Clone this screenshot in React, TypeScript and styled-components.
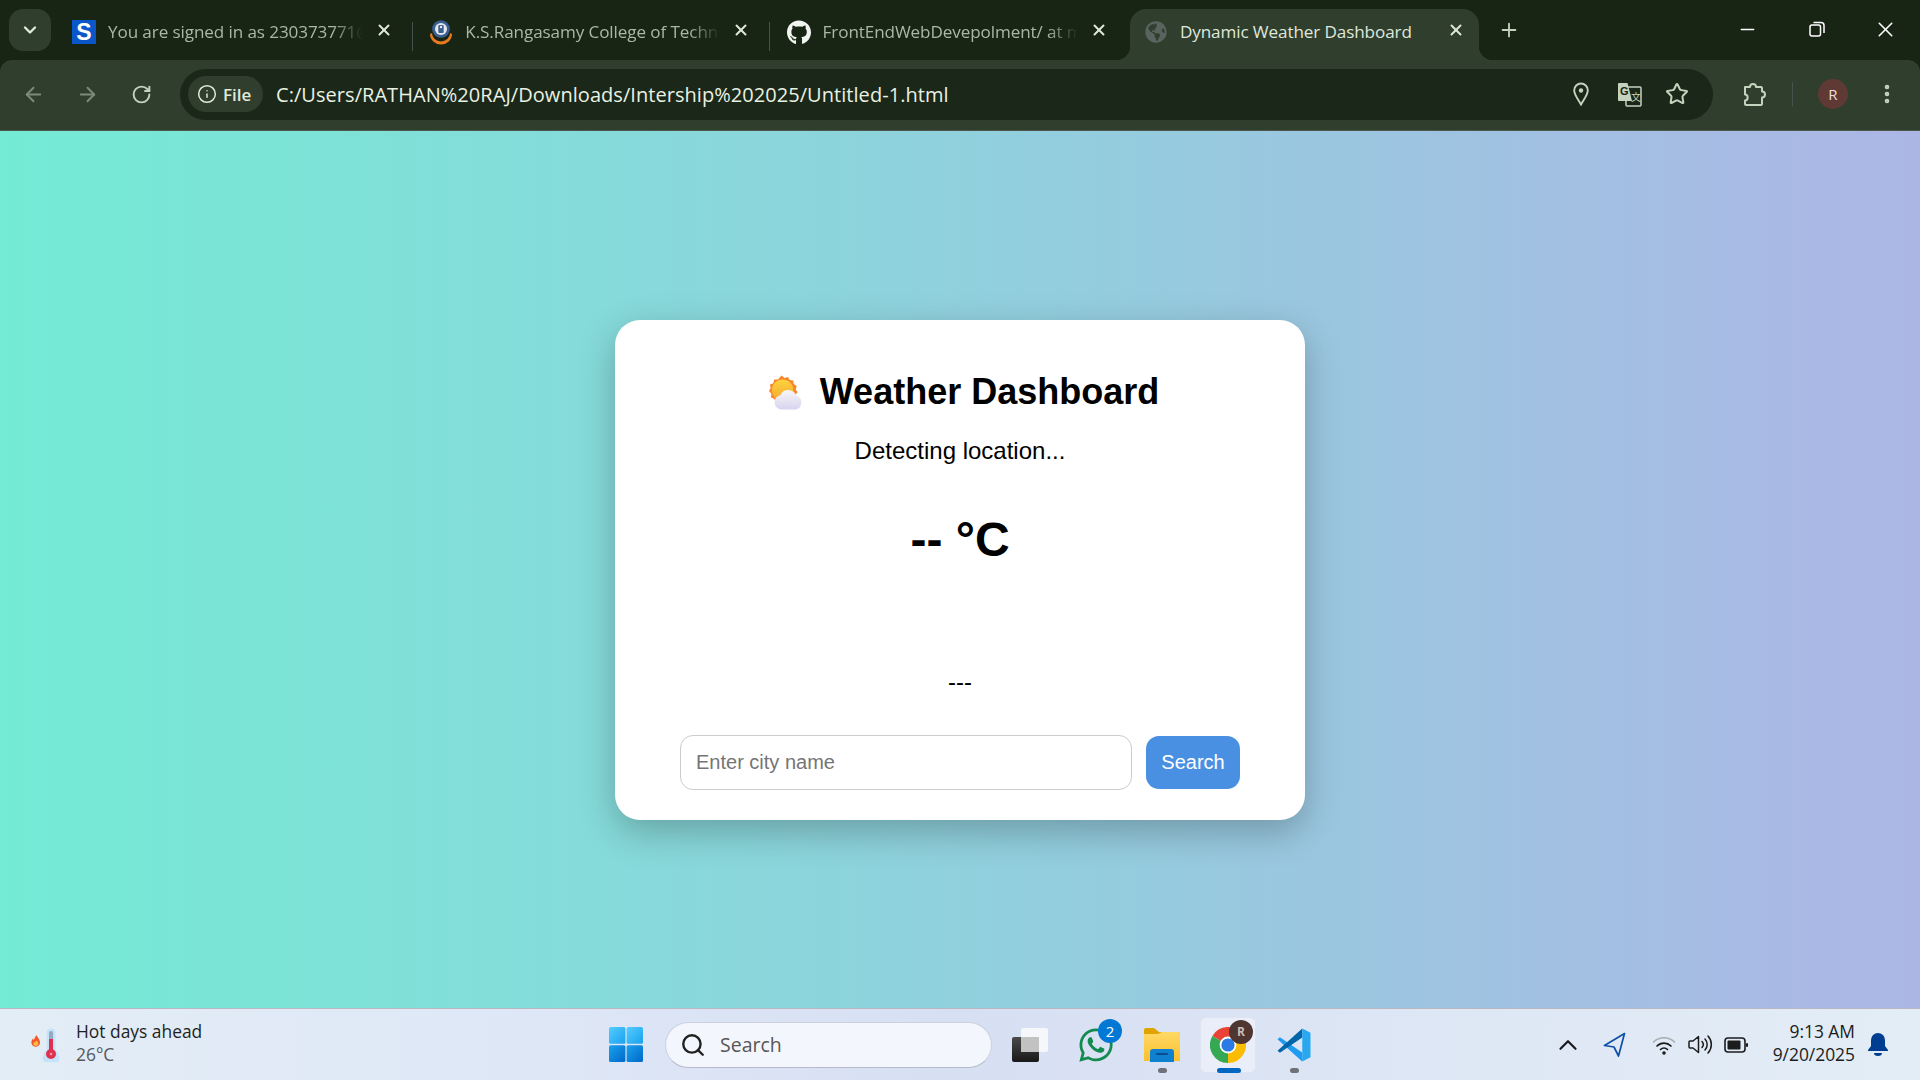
import React from "react";
import styled, { createGlobalStyle } from "styled-components";
import { ArrowLeft, ArrowRight, ChevronDown, ChevronUp, EllipsisVertical, Info, Minus, Plus, RotateCw, Search as SearchIcon, Star, X } from "lucide-react";
import { FaGithub, FaGlobeAmericas, FaWhatsapp } from "react-icons/fa";

const Global = createGlobalStyle`
  html, body { margin: 0; padding: 0; height: 1080px; overflow: hidden; }
  * { box-sizing: border-box; }
  #root { height: 1080px; }
`;

const ui = `"Open Sans", "Noto Sans", sans-serif`;
const arial = `"Liberation Sans", Arial, sans-serif`;

const Shell = styled.div`
  width: 1920px; height: 1080px; display: flex; flex-direction: column; font-family: ${ui};
  background: #182515;
`;
const TabStrip = styled.div`
  height: 60px; flex: none; display: flex; align-items: flex-end; padding-left: 9px; position: relative;
`;
const TabMenu = styled.div`
  width: 42px; height: 42px; margin: 0 7px 9px 0; border-radius: 14px; background: #303e2e; color: #e2eadd;
  display: flex; align-items: center; justify-content: center;
`;
const Tab = styled.div<{ $active?: boolean }>`
  width: 349px; height: 51px; flex: none; display: flex; align-items: center; padding: 0 14px 5px 14px; gap: 12px; position: relative;
  border-radius: 16px 16px 0 0;
  background: ${p => (p.$active ? "#303e2e" : "transparent")};
  color: ${p => (p.$active ? "#dfe8da" : "#a9b8a5")};
  ${p => p.$active ? `
    &::before, &::after { content: ""; position: absolute; bottom: 0; width: 14px; height: 14px; }
    &::before { left: -14px; background: radial-gradient(circle at 0 0, transparent 14px, #303e2e 14.5px); }
    &::after { right: -14px; background: radial-gradient(circle at 100% 0, transparent 14px, #303e2e 14.5px); }
  ` : ""}
`;
const TabIconBox = styled.div`
  width: 24px; height: 24px; flex: none; display: flex; align-items: center; justify-content: center;
`;
const SophosIcon = styled.div`
  width: 24px; height: 24px; background: #0b57c9; color: #fff; font: bold 23px/24px ${arial}; text-align: center;
`;
const TabTitle = styled.div`
  flex: 1; min-width: 0; white-space: nowrap; overflow: hidden; font-size: 17.1px; letter-spacing: -0.1px; line-height: 24px;
  -webkit-mask-image: linear-gradient(to right, #000 88%, transparent 100%);
  mask-image: linear-gradient(to right, #000 88%, transparent 100%);
`;
const ActiveTitle = styled(TabTitle)`
  -webkit-mask-image: none; mask-image: none;
`;
const TabClose = styled(X)`
  flex: none; width: 18px; height: 18px; margin-bottom: 4px; color: #dfe8da; stroke-width: 2.6;
`;
const TabSep = styled.div<{ $hidden?: boolean }>`
  width: 1px; height: 29px; flex: none; margin: 0 2.3px 9px 5px; background: ${p => (p.$hidden ? "transparent" : "#47534a")};
`;
const NewTab = styled(Plus)`
  width: 22px; height: 22px; flex: none; margin: 0 0 19px 19px; color: #c4d3bd; stroke-width: 2;
`;
const WindowControls = styled.div`
  margin-left: auto; display: flex; height: 60px; color: #fff;
`;
const WindowButton = styled.div`
  width: 69px; height: 58px; display: flex; align-items: center; justify-content: center;
`;
const Toolbar = styled.div`
  height: 71px; flex: none; display: flex; align-items: center; padding: 0 0 2px 6px; background: #303e2e;
  border-radius: 12px 12px 0 0; border-bottom: 1px solid #4d574c;
`;
const NavButton = styled.div`
  width: 54px; height: 40px; display: flex; align-items: center; justify-content: center; color: #c4d3bd;
`;
const DimNav = styled(NavButton)`
  color: #7d8c79;
`;
const Omnibox = styled.div`
  width: 1533px; height: 51px; margin-left: 12px; border-radius: 26px; background: #1b2718; display: flex; align-items: center;
  padding: 0 12px 0 8px;
`;
const Chip = styled.div`
  width: 75px; height: 36px; border-radius: 18px; background: #303e2e; color: #e0e9da; display: flex; align-items: center; gap: 6px;
  padding-left: 9px; font-size: 17px; font-weight: 600;
`;
const Url = styled.div`
  margin-left: 13px; flex: 1; color: #e8f1e2; font-size: 20px; letter-spacing: 0.05px; white-space: nowrap;
`;
const OmniIcon = styled.div`
  width: 48px; height: 40px; display: flex; align-items: center; justify-content: center; color: #c4d3bd;
`;
const PuzzleBox = styled(OmniIcon)`
  margin-left: 17px;
`;
const ToolSep = styled.div`
  width: 1px; height: 24px; margin-left: 14px; background: #47534a;
`;
const Avatar = styled.div`
  width: 30px; height: 30px; margin-left: 25px; border-radius: 50%; background: #5f3a35; color: #ecdcd8; font-size: 15px;
  display: flex; align-items: center; justify-content: center;
`;
const MenuDots = styled.div`
  width: 24px; margin-left: 27px; display: flex; justify-content: center; color: #c4d3bd;
`;
const Main = styled.main`
  flex: 1; min-height: 0; display: flex; align-items: center; justify-content: center;
  background: linear-gradient(to right, #74ebd5, #acb6e5);
`;
const Card = styled.section`
  width: 690px; height: 500px; margin-top: 1px; background: #fff; border-radius: 25px; padding: 51px 65px 30px;
  box-shadow: 0 12px 36px rgba(0,0,0,.25); font-family: ${arial}; color: #000; text-align: center; display: flex; flex-direction: column;
`;
const Title = styled.h1`
  margin: 0; padding-left: 7px; font-size: 36px; font-weight: 700; line-height: 42px; display: flex; align-items: center; justify-content: center; gap: 17px;
`;
const Location = styled.p`
  margin: 24px 0 0; font-size: 24px; line-height: 28px;
`;
const Temperature = styled.p`
  margin: 47px 0 0; font-size: 48px; font-weight: 700; line-height: 56px;
`;
const Condition = styled.p`
  margin: 100px 0 0; font-size: 24px; line-height: 28px;
`;
const SearchRow = styled.form`
  margin-top: auto; display: flex; align-items: center; gap: 14px;
`;
const CityInput = styled.input`
  flex: 1; min-width: 0; height: 55px; border: 1px solid #ccc; border-radius: 13px; padding: 0 15px; font: 20px ${arial}; outline: none;
  &::placeholder { color: #757575; }
`;
const SearchButton = styled.button`
  width: 94px; height: 53px; border: 0; border-radius: 13px; background: #4a90e2; color: #fff; font: 20px ${arial};
`;
const Taskbar = styled.footer`
  height: 72px; flex: none; display: flex; align-items: center; border-top: 1px solid #b6b8c2;
  background: linear-gradient(to right, #e3edf6 0%, #dfe8f6 25%, #d7dff3 50%, #dde6f4 72%, #e3edf6 100%);
`;
const Widget = styled.div`
  width: 609px; flex: none; display: flex; align-items: center; padding-left: 31px; gap: 15px;
`;
const WidgetText = styled.div`
  color: #1d1f22; font-size: 17.4px; line-height: 23px; white-space: nowrap; margin-top: -3px;
`;
const WidgetSub = styled.div`
  color: #56585c;
`;
const StartBox = styled.div`
  width: 34px; height: 35px; flex: none;
`;
const TaskSearch = styled.div`
  width: 327px; height: 46px; margin-left: 22px; flex: none; border-radius: 23px; background: #f3f6fc;
  border: 1px solid #ccd1de; border-bottom-color: #b6bac8; display: flex; align-items: center; padding-left: 14px; gap: 14px;
  color: #565656; font-size: 19.5px;
`;
const TaskItem = styled.div<{ $gap: number }>`
  width: 36px; height: 38px; flex: none; margin-left: ${p => p.$gap}px; position: relative; display: flex; align-items: center; justify-content: center;
`;
const ActiveItem = styled.div`
  width: 56px; height: 56px; flex: none; margin-left: 20px; position: relative; border-radius: 6px; background: #e9eef9;
  border: 1px solid #dfe4f1; display: flex; align-items: center; justify-content: center;
`;
const RunDot = styled.span`
  position: absolute; left: 50%; bottom: -9px; width: 9px; height: 5px; margin-left: -4px; border-radius: 3px; background: #6f7278;
`;
const RunBar = styled.span`
  position: absolute; left: 16px; bottom: -1px; width: 24px; height: 5px; border-radius: 3px; background: #0067c0;
`;
const CountBadge = styled.span`
  position: absolute; right: -8px; top: -7px; width: 24px; height: 24px; border-radius: 50%; background: #0078d4; color: #fff;
  font-size: 15px; display: flex; align-items: center; justify-content: center;
`;
const ProfileBadge = styled.span`
  position: absolute; right: 2px; top: 2px; width: 24px; height: 24px; border-radius: 50%; background: #4f3630; color: #c9bdb9;
  font-size: 12px; font-weight: 700; display: flex; align-items: center; justify-content: center;
`;
const Tray = styled.div`
  margin-left: auto; padding-right: 32px; display: flex; align-items: center; color: #1c1c1c;
`;
const TrayIcon = styled.div<{ $gap: number; $w: number }>`
  width: ${p => p.$w}px; margin-left: ${p => p.$gap}px; display: flex; align-items: center; justify-content: center;
  svg { flex: none; }
`;
const Clock = styled.div`
  margin-left: 25px; margin-top: -3px; text-align: right; font-size: 17.4px; line-height: 23px; color: #1c1c1c; white-space: nowrap;
`;
const BellBox = styled.div`
  width: 20px; margin-left: 13px; display: flex;
`;

const PinIcon = () => (
  <svg width="16" height="24" viewBox="0 0 16 24" fill="none" stroke="currentColor" strokeWidth="1.9">
    <path d="M8 22.5 C5 17 1.2 13 1.2 8.3 A6.8 6.8 0 0 1 14.8 8.3 C14.8 13 11 17 8 22.5Z" />
    <circle cx="8" cy="8.5" r="2.2" fill="currentColor" stroke="none" />
  </svg>
);
const TranslateIcon = () => (
  <svg width="25" height="25" viewBox="0 0 25 25">
    <rect x="9" y="5" width="15" height="19" rx="1" fill="#1b2718" stroke="#c4d3bd" strokeWidth="1.5" />
    <path d="M1 2a1 1 0 0 1 1-1h8.500l4.500 18H2a1 1 0 0 1-1-1z" fill="#c4d3bd" />
    <text x="3" y="13" fontSize="11" fontWeight="700" fontFamily="Liberation Sans" fill="#1b2718">G</text>
    <text x="14" y="19" fontSize="10" fontFamily="Noto Sans CJK SC" fill="#c4d3bd">文</text>
  </svg>
);
const PuzzleIcon = () => (
  <svg width="26" height="26" viewBox="0 0 26 26" fill="none" stroke="currentColor" strokeWidth="2" strokeLinejoin="round">
    <path d="M4 6h5c0-4 6-4 6 0h5a1 1 0 0 1 1 1v3.500c4 0 4 6 0 6V23a1 1 0 0 1-1 1H5a1 1 0 0 1-1-1v-3.500c3.500 0 3.500-6 0-6z" />
  </svg>
);
const SunCloud = () => (
  <svg width="35" height="35" viewBox="0 0 36 35" style={{ flex: "none" }}>
    <defs>
      <linearGradient id="sunFill" x1="0" y1="0" x2="0" y2="1"><stop offset="0" stopColor="#fdd33f" /><stop offset="1" stopColor="#f5a92e" /></linearGradient>
      <linearGradient id="cloudFill" x1="0" y1="0" x2="0" y2="1"><stop offset="0" stopColor="#f7f6f8" /><stop offset="1" stopColor="#d9d3f0" /></linearGradient>
    </defs>
    <path d="M15 0l3 2.500 3.500-1 1.800 3.200 3.700.4.500 3.700 3 2-1 3.500 2 3-2.500 2.700.3 3.700-3.500 1.300L22 29l-3.500-.5L15 30l-2.500-2.700-3.700.3-1.300-3.500L4 22.500l.5-3.700L2 16l1.800-3.200L3 9.200l3.500-1.300L7.500 4.200l3.700-.2z" fill="#f9862b" transform="translate(-1 0)" />
    <circle cx="15" cy="15" r="11" fill="url(#sunFill)" />
    <path d="M14 35a7.500 7.500 0 0 1-1.500-14.800A9 9 0 0 1 29 20.500a7.500 7.500 0 0 1-.5 14.500z" fill="url(#cloudFill)" />
  </svg>
);
const Thermo = () => (
  <svg width="30" height="34" viewBox="0 0 30 34">
    <path d="M5.500 7c.5 2 3.500 4 3.500 7.500a4.300 4.300 0 0 1-8.600 0c0-2 1-3 1.300-4 .5 1 .8 1.200 1.300 1.300 .2-1.500 1.500-3 2.500-4.800z" fill="#f0592b" />
    <path d="M6 12.500c.8 1.300 1.300 2 1.300 3a2.500 2.500 0 0 1-5 0c0-1 1.300-1.500 3.700-3z" fill="#fbb93f" />
    <path d="M20 .5a4.300 4.300 0 0 1 4.300 4.500v17.500a8.300 8.300 0 1 1-8.600 0V5A4.300 4.300 0 0 1 20 .5z" fill="#c4e2f8" />
    <rect x="18" y="3" width="4" height="12" rx="2" fill="#93a9bf" />
    <rect x="18" y="11" width="4" height="14" fill="#e0304f" />
    <circle cx="20" cy="26" r="5" fill="#e0304f" />
    <circle cx="20" cy="26" r="1.300" fill="#f7a0ad" />
  </svg>
);
const WindowsLogo = () => (
  <svg width="34" height="35" viewBox="0 0 34 35">
    <defs>
      <linearGradient id="winA" x1="0" y1="0" x2="1" y2="1"><stop offset="0" stopColor="#55ccff" /><stop offset="1" stopColor="#18a2ef" /></linearGradient>
      <linearGradient id="winB" x1="0" y1="0" x2="1" y2="1"><stop offset="0" stopColor="#1aa2ee" /><stop offset="1" stopColor="#0068c8" /></linearGradient>
    </defs>
    <rect x="0" y="0" width="16.400" height="16.800" rx="1.500" fill="url(#winA)" />
    <rect x="17.600" y="0" width="16.400" height="16.800" rx="1.500" fill="url(#winA)" />
    <rect x="0" y="18.200" width="16.400" height="16.800" rx="1.500" fill="url(#winB)" />
    <rect x="17.600" y="18.200" width="16.400" height="16.800" rx="1.500" fill="url(#winB)" />
  </svg>
);
const TaskView = () => (
  <svg width="36" height="34" viewBox="0 0 36 34">
    <defs><linearGradient id="tvB" x1="0" y1="0" x2="0" y2="1"><stop offset="0" stopColor="#4a4a4a" /><stop offset="1" stopColor="#191919" /></linearGradient></defs>
    <rect x="0" y="9" width="27" height="25" rx="2" fill="url(#tvB)" />
    <rect x="9" y="0" width="27" height="24" rx="2" fill="#fafafa" fillOpacity=".85" />
    <rect x="9" y="9" width="18" height="15" fill="#c2c2c2" />
  </svg>
);
const FolderIcon = () => (
  <svg width="36" height="34" viewBox="0 0 36 34">
    <defs><linearGradient id="fold" x1="0" y1="0" x2="0" y2="1"><stop offset="0" stopColor="#ffd966" /><stop offset="1" stopColor="#fbc02d" /></linearGradient></defs>
    <path d="M0 2a2 2 0 0 1 2-2h8l5 4h19a2 2 0 0 1 2 2v6H0z" fill="#dfa400" />
    <path d="M0 6h14l4-2h16a2 2 0 0 1 2 2v27H0z" fill="url(#fold)" />
    <path d="M6 34V24a3 3 0 0 1 3-3h18a3 3 0 0 1 3 3v10z" fill="#0f7fd0" />
    <rect x="12" y="25" width="12" height="2" rx="1" fill="#0a4c8c" />
  </svg>
);
const ChromeIcon = () => (
  <svg width="36" height="36" viewBox="0 0 24 24">
    <path d="M12 12L1.600 6A12 12 0 0 1 22.400 6Z" fill="#ea4335" />
    <path d="M12 12L22.400 6A12 12 0 0 1 12 24Z" fill="#fbbc04" />
    <path d="M12 12L12 24A12 12 0 0 1 1.600 6Z" fill="#34a853" />
    <circle cx="12" cy="12" r="5.600" fill="#fff" />
    <circle cx="12" cy="12" r="4.400" fill="#2a7be6" />
  </svg>
);
const VSCodeIcon = () => (
  <svg width="36" height="36" viewBox="0 0 24 24">
    <path d="M2.600 6.800L1 8.200l12 10.800 4.500 4V17z" fill="#1f9cf0" />
    <path d="M17.500 1L1 15.800l1.600 1.400L17.500 7z" fill="#0065a9" />
    <path d="M17.500 1L23 3.800v16.400L17.500 23z" fill="#29a8f0" />
  </svg>
);
const KsrIcon = () => (
  <svg width="24" height="26" viewBox="0 0 24 26">
    <path d="M1 15a11 10.500 0 0 0 22 0l-2-1a9 8.500 0 0 1-18 0z" fill="#e8791e" />
    <circle cx="12" cy="10" r="8.800" fill="#3a5f92" />
    <circle cx="12" cy="10" r="6" fill="#e8e8e8" />
    <rect x="9.300" y="6" width="5.400" height="8" rx="1" fill="#3a5f92" />
    <circle cx="12" cy="8" r="1.200" fill="#e8e8e8" />
  </svg>
);
const LocationArrow = () => (
  <svg width="23" height="25" viewBox="0 0 23 25" fill="none" stroke="#0f4fa8" strokeWidth="1.700" strokeLinejoin="round">
    <path d="M21.500 1.500L1.500 13.500l9.500 1.500 4.500 9z" />
  </svg>
);
const WifiIcon = () => (
  <svg width="24" height="20" viewBox="0 0 24 20" fill="none" strokeLinecap="round">
    <path d="M1.500 7a15 15 0 0 1 21 0" stroke="#a9abb0" strokeWidth="1.600" />
    <path d="M5 11a10 10 0 0 1 14 0" stroke="#1c1c1c" strokeWidth="1.700" />
    <path d="M8.500 14.500a5 5 0 0 1 7 0" stroke="#1c1c1c" strokeWidth="1.700" />
    <circle cx="12" cy="18" r="1.800" fill="#1c1c1c" />
  </svg>
);
const SpeakerIcon = () => (
  <svg width="25" height="21" viewBox="0 0 25 21" fill="none" stroke="#1c1c1c" strokeWidth="1.500" strokeLinecap="round" strokeLinejoin="round">
    <path d="M1 8v5a1 1 0 0 0 1 1h3l5.500 4.500V2.500L5 7H2a1 1 0 0 0-1 1z" />
    <path d="M14 7.500a4.500 4.500 0 0 1 0 6" />
    <path d="M17 5a8 8 0 0 1 0 11" />
    <path d="M20 2a12.500 12.500 0 0 1 0 17" />
  </svg>
);
const BatteryIcon = () => (
  <svg width="24" height="16" viewBox="0 0 24 16" fill="none">
    <rect x="1" y="1" width="20" height="14" rx="3" stroke="#1c1c1c" strokeWidth="1.600" />
    <rect x="3.500" y="3.500" width="13" height="9" rx="1" fill="#1c1c1c" />
    <rect x="22" y="6" width="2" height="4" rx="1" fill="#1c1c1c" />
  </svg>
);
const BellFilled = () => (
  <svg width="20" height="23" viewBox="0 0 20 23">
    <path d="M10 0a7 7 0 0 1 7 7v6l3 4v1H0v-1l3-4V7a7 7 0 0 1 7-7z" fill="#003e92" />
    <path d="M6 20h8a4 3 0 0 1-8 0z" fill="#003e92" />
  </svg>
);

export default function App() {
  return (
    <Shell>
      <Global />
      <TabStrip>
        <TabMenu><ChevronDown size={20} strokeWidth={2.8} /></TabMenu>
        <Tab><TabIconBox><SophosIcon>S</SophosIcon></TabIconBox><TabTitle>You are signed in as 230373771@ksrce</TabTitle><TabClose /></Tab>
        <TabSep />
        <Tab><TabIconBox><KsrIcon /></TabIconBox><TabTitle>K.S.Rangasamy College of Technology</TabTitle><TabClose /></Tab>
        <TabSep />
        <Tab><TabIconBox><FaGithub size={25} color="#f1f5ef" /></TabIconBox><TabTitle>FrontEndWebDevepolment/ at main</TabTitle><TabClose /></Tab>
        <TabSep $hidden />
        <Tab $active><TabIconBox><FaGlobeAmericas size={22} color="#596360" /></TabIconBox><ActiveTitle>Dynamic Weather Dashboard</ActiveTitle><TabClose /></Tab>
        <NewTab />
        <WindowControls>
          <WindowButton><Minus size={21} strokeWidth={1.8} /></WindowButton>
          <WindowButton>
            <svg width="16" height="16" viewBox="0 0 16 16" fill="none" stroke="#fff" strokeWidth="1.500"><rect x="1" y="4" width="10.500" height="11" rx="2" /><path d="M4.500 1.500H12a3 3 0 0 1 3 3V12" /></svg>
          </WindowButton>
          <WindowButton><X size={25} strokeWidth={1.5} /></WindowButton>
        </WindowControls>
      </TabStrip>
      <Toolbar>
        <DimNav><ArrowLeft size={23} strokeWidth={2} /></DimNav>
        <DimNav><ArrowRight size={23} strokeWidth={2} /></DimNav>
        <NavButton><RotateCw size={21} strokeWidth={2.2} /></NavButton>
        <Omnibox>
          <Chip><Info size={20} strokeWidth={1.8} />File</Chip>
          <Url>C:/Users/RATHAN%20RAJ/Downloads/Intership%202025/Untitled-1.html</Url>
          <OmniIcon><PinIcon /></OmniIcon>
          <OmniIcon><TranslateIcon /></OmniIcon>
          <OmniIcon><Star size={24} strokeWidth={2} /></OmniIcon>
        </Omnibox>
        <PuzzleBox><PuzzleIcon /></PuzzleBox>
        <ToolSep />
        <Avatar>R</Avatar>
        <MenuDots><EllipsisVertical size={24} strokeWidth={2.6} /></MenuDots>
      </Toolbar>
      <Main>
        <Card>
          <Title><SunCloud />Weather Dashboard</Title>
          <Location>Detecting location...</Location>
          <Temperature>-- °C</Temperature>
          <Condition>---</Condition>
          <SearchRow onSubmit={e => e.preventDefault()}>
            <CityInput placeholder="Enter city name" />
            <SearchButton type="submit">Search</SearchButton>
          </SearchRow>
        </Card>
      </Main>
      <Taskbar>
        <Widget>
          <Thermo />
          <WidgetText>Hot days ahead<WidgetSub>26°C</WidgetSub></WidgetText>
        </Widget>
        <StartBox><WindowsLogo /></StartBox>
        <TaskSearch><SearchIcon size={26} strokeWidth={2.2} color="#222" />Search</TaskSearch>
        <TaskItem $gap={20}><TaskView /></TaskItem>
        <TaskItem $gap={30}><FaWhatsapp size={38} color="#138a4e" /><CountBadge>2</CountBadge></TaskItem>
        <TaskItem $gap={30}><FolderIcon /><RunDot /></TaskItem>
        <ActiveItem><ChromeIcon /><ProfileBadge>R</ProfileBadge><RunBar /></ActiveItem>
        <TaskItem $gap={20}><VSCodeIcon /><RunDot /></TaskItem>
        <Tray>
          <TrayIcon $gap={0} $w={16}><ChevronUp size={30} strokeWidth={1.8} /></TrayIcon>
          <TrayIcon $gap={27} $w={23}><LocationArrow /></TrayIcon>
          <TrayIcon $gap={26} $w={24}><WifiIcon /></TrayIcon>
          <TrayIcon $gap={12} $w={25}><SpeakerIcon /></TrayIcon>
          <TrayIcon $gap={11} $w={24}><BatteryIcon /></TrayIcon>
          <Clock>9:13 AM<br />9/20/2025</Clock>
          <BellBox><BellFilled /></BellBox>
        </Tray>
      </Taskbar>
    </Shell>
  );
}
